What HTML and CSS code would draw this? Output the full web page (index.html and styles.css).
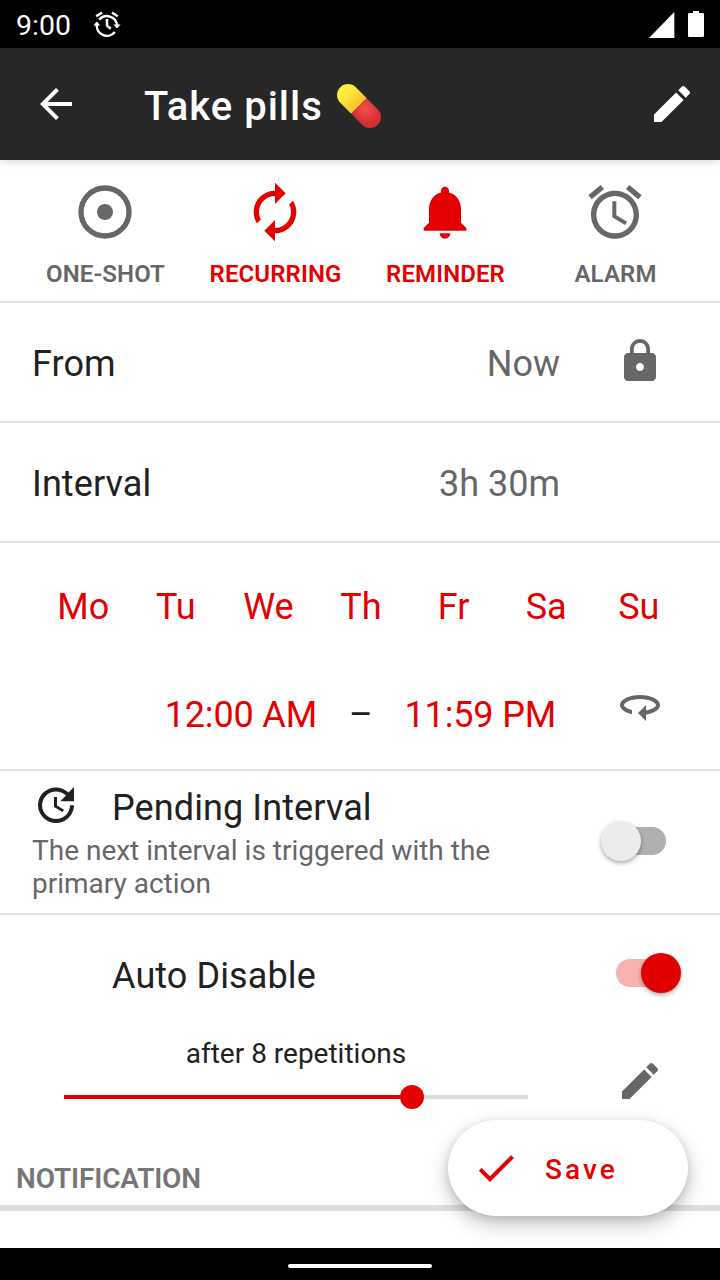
FILE: index.html
```html
<!doctype html>
<html lang="en">
  <head>
    <meta charset="utf-8">
    <title>Take pills</title>
    <meta name="viewport" content="width=device-width, initial-scale=1">
    <link rel="stylesheet" href="styles.css">
  </head>
  <body>
    <div class="statusbar">
      <span class="clock">9:00</span>
      <svg class="status-alarm" viewBox="0 0 28 28" fill="none" stroke="#fff" stroke-width="2.5">
        <path d="M3.2 5.2L9 1.6M24.8 5.2L19 1.6"/>
        <path d="M6.2 8.6A10.2 10.2 0 0 1 24 14.5"/>
        <path d="M21.8 21A10.2 10.2 0 0 1 3.8 13"/>
        <path d="M14 8v6.6l3.8 3.2"/>
        <path d="M.4 14.5h6.8L3.8 10.6zM20.4 13.4h7.2L24 17.6z" fill="#fff" stroke="none"/>
      </svg>
      <svg class="signal" viewBox="0 0 26 26"><path d="M0 26L25.3 0v26z" fill="#fff"/></svg>
      <svg class="battery" viewBox="0 0 16 26"><path d="M5 0h6v2h3.700q1.300 0 1.300 1.300v21.400q0 1.300-1.300 1.300H1.300Q0 26 0 24.700V3.300Q0 2 1.300 2H5z" fill="#fff"/></svg>
    </div>

    <header class="appbar">
      <svg class="icon" viewBox="0 0 24 24"><path d="M20 11H7.830l5.590-5.590L12 4l-8 8 8 8 1.410-1.410L7.830 13H20v-2z"/></svg>
      <h1 class="title">Take pills</h1>
      <svg class="pill" viewBox="0 0 46 46">
        <defs>
          <linearGradient id="yellow" x1="0" y1="0" x2="1" y2="0">
            <stop offset="0.300" stop-color="#ffeb3b"/>
            <stop offset="1" stop-color="#fbc02d"/>
          </linearGradient>
          <radialGradient id="red" cx="0.250" cy="0.400" r="0.700">
            <stop offset="0" stop-color="#ef5350"/>
            <stop offset="0.850" stop-color="#d32f2f"/>
          </radialGradient>
        </defs>
        <g transform="rotate(45 23 23)">
          <path d="M23 12H7.500a11 11 0 0 0 0 22H23z" fill="url(#yellow)"/>
          <path d="M23 12h15.500a11 11 0 0 1 0 22H23z" fill="url(#red)"/>
        </g>
      </svg>
      <svg class="icon appbar-edit" viewBox="0 0 24 24"><path d="M3 17.250V21h3.750L17.810 9.940l-3.750-3.750L3 17.250zM20.710 7.040c.39-.39.39-1.020 0-1.410l-2.340-2.340c-.39-.39-1.020-.39-1.410 0l-1.830 1.830 3.750 3.750 1.830-1.830z"/></svg>
    </header>

    <main class="content">
      <nav class="tabs">
        <div class="tab">
          <svg class="tab-icon" viewBox="0 0 24 24"><circle cx="12" cy="12" r="9" fill="none" stroke="currentColor" stroke-width="2"/><circle cx="12" cy="12" r="3"/></svg>
          <span>ONE-SHOT</span>
        </div>
        <div class="tab active">
          <svg class="tab-icon" viewBox="0 0 24 24"><path d="M12 6v3l4-4-4-4v3c-4.420 0-8 3.580-8 8 0 1.570.46 3.030 1.240 4.260L6.700 14.800c-.45-.83-.7-1.790-.7-2.800 0-3.310 2.690-6 6-6zm6.760 1.740L17.300 9.200c.44.84.7 1.790.7 2.800 0 3.310-2.690 6-6 6v-3l-4 4 4 4v-3c4.420 0 8-3.580 8-8 0-1.570-.46-3.030-1.240-4.260z"/></svg>
          <span>RECURRING</span>
        </div>
        <div class="tab active">
          <svg class="tab-icon" viewBox="0 0 24 24"><path d="M12 22c1.100 0 2-.9 2-2h-4c0 1.100.89 2 2 2zm6-6v-5c0-3.070-1.640-5.640-4.500-6.320V4c0-.83-.67-1.500-1.500-1.500s-1.500.67-1.500 1.500v.68C7.630 5.360 6 7.920 6 11v5l-2 2v1h16v-1l-2-2z"/></svg>
          <span>REMINDER</span>
        </div>
        <div class="tab">
          <svg class="tab-icon" viewBox="0 0 24 24"><path d="M22 5.720l-4.600-3.860-1.290 1.530 4.600 3.860L22 5.720zM7.880 3.390L6.600 1.860 2 5.710l1.290 1.530 4.590-3.850zM12.500 8H11v6l4.750 2.850.75-1.230-4-2.370V8zM12 4c-4.970 0-9 4.030-9 9s4.020 9 9 9c4.970 0 9-4.030 9-9s-4.030-9-9-9zm0 16c-3.870 0-7-3.130-7-7s3.130-7 7-7 7 3.130 7 7-3.130 7-7 7z"/></svg>
          <span>ALARM</span>
        </div>
      </nav>

      <div class="row">
        <span class="label">From</span>
        <span class="value">Now</span>
        <svg class="icon row-icon" viewBox="0 0 24 24"><path d="M18 8h-1V6c0-2.760-2.240-5-5-5S7 3.240 7 6v2H6c-1.100 0-2 .9-2 2v10c0 1.100.9 2 2 2h12c1.100 0 2-.9 2-2V10c0-1.100-.9-2-2-2zm-6 9c-1.100 0-2-.9-2-2s.9-2 2-2 2 .9 2 2-.9 2-2 2zm3.100-9H8.900V6c0-1.710 1.390-3.100 3.100-3.100 1.710 0 3.100 1.390 3.100 3.100v2z"/></svg>
      </div>

      <div class="row">
        <span class="label">Interval</span>
        <span class="value">3h 30m</span>
        <span class="row-icon"></span>
      </div>

      <section class="schedule">
        <div class="days">
          <span>Mo</span><span>Tu</span><span>We</span><span>Th</span><span>Fr</span><span>Sa</span><span>Su</span>
        </div>
        <div class="times">
          <span class="time">12:00 AM</span>
          <span class="dash">–</span>
          <span class="time">11:59 PM</span>
          <svg class="icon all-day" viewBox="0 0 24 24"><path transform="translate(24) scale(-1 1)" d="M12 7C6.480 7 2 9.240 2 12c0 2.240 2.940 4.130 7 4.770V20l4-4-4-4v2.730c-3.150-.56-5-1.900-5-2.730 0-1.060 3.040-3 8-3s8 1.940 8 3c0 .73-1.460 1.890-4 2.530v2.050c3.530-.77 6-2.530 6-4.580 0-2.760-4.480-5-10-5z"/></svg>
        </div>
      </section>

      <section class="pending">
        <div class="pending-text">
          <div class="pending-head">
            <svg class="icon" viewBox="0 0 24 24"><path d="M21 10.120h-6.780l2.740-2.820c-2.730-2.700-7.150-2.800-9.880-.1-2.730 2.710-2.730 7.080 0 9.790s7.150 2.710 9.880 0C18.320 15.650 19 14.080 19 12.100h2c0 1.980-.88 4.550-2.640 6.290-3.510 3.480-9.210 3.480-12.720 0-3.500-3.470-3.530-9.110-.02-12.580s9.140-3.470 12.650 0L21 3v7.120zM12.500 8v4.250l3.500 2.080-.72 1.210L11 13V8h1.500z"/></svg>
            <span class="label">Pending Interval</span>
          </div>
          <p class="hint">The next interval is triggered with the primary action</p>
        </div>
        <div class="switch"><span class="thumb"></span></div>
      </section>

      <section class="auto">
        <div class="auto-head">
          <span class="label">Auto Disable</span>
          <div class="switch on"><span class="thumb"></span></div>
        </div>
        <div class="auto-body">
          <div class="repeat">
            <span class="repeat-text">after 8 repetitions</span>
            <div class="slider">
              <div class="slider-fill" style="width: 75%"></div>
              <div class="slider-thumb"></div>
            </div>
          </div>
          <svg class="icon" viewBox="0 0 24 24"><path d="M3 17.250V21h3.750L17.810 9.940l-3.750-3.750L3 17.250zM20.710 7.040c.39-.39.39-1.020 0-1.410l-2.340-2.340c-.39-.39-1.020-.39-1.410 0l-1.830 1.830 3.750 3.750 1.830-1.830z"/></svg>
        </div>
      </section>

      <h2 class="section-title">NOTIFICATION</h2>

      <button class="save">
        <svg class="icon" viewBox="0 0 24 24"><path d="M9 16.170L4.830 12l-1.420 1.410L9 19 21 7l-1.410-1.410z"/></svg>
        <span>Save</span>
      </button>
    </main>

    <div class="navbar"><span class="handle"></span></div>
  </body>
</html>
```

FILE: styles.css
```css
* {
  box-sizing: border-box;
}
body {
  margin: 0;
  width: 720px;
  height: 1280px;
  overflow: hidden;
  display: flex;
  flex-direction: column;
  font-family: Roboto, "Liberation Sans", sans-serif;
  color: #212121;
  background: #fff;
}
svg {
  display: block;
  flex: none;
  fill: currentColor;
}
.icon {
  width: 48px;
  height: 48px;
}

/* system bars */
.statusbar {
  height: 48px;
  flex: none;
  padding: 0 16px;
  display: flex;
  align-items: center;
  background: #000;
  color: #fff;
}
.clock {
  width: 77px;
  font-size: 28.5px;
  line-height: 32px;
  padding-top: 3px;
}
.status-alarm {
  width: 28px;
  height: 28px;
  margin-top: 2px;
  fill: none;
}
.signal {
  width: 26px;
  height: 26px;
  margin-top: 1px;
  margin-left: auto;
  margin-right: 13px;
}
.battery {
  width: 16px;
  height: 26px;
}
.navbar {
  height: 32px;
  flex: none;
  display: flex;
  justify-content: center;
  padding-top: 16px;
  background: #000;
}
.handle {
  width: 144px;
  height: 4px;
  border-radius: 2px;
  background: #fff;
}

.appbar {
  height: 112px;
  flex: none;
  padding: 0 24px 0 32px;
  display: flex;
  align-items: center;
  background: #272727;
  color: #fff;
  position: relative;
  z-index: 1;
  box-shadow: 0 2px 8px rgba(0, 0, 0, 0.15);
}
.title {
  margin: 0 0 0 64px;
  padding-top: 5px;
  font-size: 40px;
  font-weight: 500;
  line-height: 49px;
  letter-spacing: 1px;
}
.pill {
  width: 46px;
  height: 46px;
  margin: 4px 0 0 13px;
}
.appbar-edit {
  margin-left: auto;
}

.content {
  flex: 1;
  min-height: 0;
  position: relative;
}

/* type tabs */
.tabs {
  height: 143px;
  padding: 20px 20px 0;
  display: flex;
  border-bottom: 2px solid #e0e0e0;
}
.tab {
  flex: 1;
  display: flex;
  flex-direction: column;
  align-items: center;
  gap: 16px;
  font-size: 24px;
  font-weight: 600;
  line-height: 28px;
  letter-spacing: 0.1px;
  color: #676767;
}
.tab span {
  padding-left: 1px;
}
.tab.active {
  color: #e40000;
}
.tab-icon {
  width: 64px;
  height: 64px;
}

.row {
  height: 120px;
  padding: 0 56px 2px 32px;
  display: flex;
  align-items: center;
  border-bottom: 2px solid #e0e0e0;
}
.label,
.value,
.days,
.times {
  font-size: 36px;
  line-height: 42px;
}
.label {
  letter-spacing: 0.1px;
}
.row .label,
.value {
  padding-top: 6px;
}
.value {
  margin-left: auto;
  color: #676767;
}
.row-icon {
  width: 48px;
  margin-left: 56px;
  color: #676767;
}

.schedule {
  height: 228px;
  padding-top: 43px;
  border-bottom: 2px solid #e0e0e0;
}
.days {
  display: flex;
  padding: 0 35px 0 37px;
  color: #e40000;
}
.days span {
  flex: 1;
  text-align: center;
}
.times {
  display: flex;
  align-items: flex-start;
  justify-content: flex-end;
  padding: 53px 56px 0 0;
  letter-spacing: -0.15px;
}
.time {
  padding-top: 13px;
  color: #e40000;
}
.dash {
  padding-top: 13px;
  margin: 0 32px;
}
.all-day {
  margin-left: 60px;
}
.all-day,
.auto-body .icon {
  color: #676767;
}

.pending {
  height: 144px;
  padding: 10px 38px 0 32px;
  display: flex;
  justify-content: space-between;
  border-bottom: 2px solid #e0e0e0;
}
.pending-text {
  width: 480px;
}
.pending-head {
  height: 48px;
  display: flex;
  gap: 32px;
}
.pending-head .label {
  padding-top: 6px;
}
.hint {
  margin: 5px 0 0;
  font-size: 28px;
  line-height: 33px;
  color: #676767;
}

/* switches */
.switch {
  width: 80px;
  height: 40px;
  display: flex;
  align-items: center;
  position: relative;
}
.switch:before {
  content: '';
  width: 60px;
  height: 28px;
  margin-left: 5px;
  border-radius: 14px;
  background: #b0b0b0;
}
.pending .switch {
  width: 81px;
  margin-top: 40px;
}
.thumb {
  position: absolute;
  left: 0;
  top: 0;
  width: 40px;
  height: 40px;
  border-radius: 50%;
  background: #ececec;
  box-shadow: 0 2px 4px rgba(0, 0, 0, 0.35);
}
.switch.on:before {
  margin-left: 15px;
  background: #f7b2b2;
}
.switch.on .thumb {
  left: 40px;
  background: #e00000;
}

.auto {
  padding: 38px 56px 0 64px;
}
.auto-head {
  display: flex;
  justify-content: space-between;
  margin-right: -17px;
  padding-left: 48px;
}
.auto-head .label {
  padding-top: 2px;
}
.auto-body {
  display: flex;
  justify-content: space-between;
  padding-top: 40px;
}
.auto-body .icon {
  margin-top: 20px;
}
.repeat {
  width: 464px;
  text-align: center;
}
.repeat-text {
  display: block;
  font-size: 28px;
  line-height: 33px;
}
.slider {
  height: 24px;
  margin-top: 15px;
  display: flex;
  align-items: center;
  background: linear-gradient(#dcdcdc, #dcdcdc) center / 100% 4px no-repeat;
}
.slider-fill {
  height: 4px;
  background: #e40000;
}
.slider-thumb {
  width: 24px;
  height: 24px;
  margin-left: -12px;
  border-radius: 50%;
  background: #e40000;
}

.section-title {
  margin: 0;
  padding: 53px 16px 10px;
  font-size: 28px;
  font-weight: 600;
  line-height: 33px;
  letter-spacing: -0.15px;
  color: #767676;
  border-bottom: 6px solid #e0e0e0;
}

/* floating save button */
.save {
  position: absolute;
  right: 32px;
  bottom: 32px;
  width: 240px;
  height: 96px;
  padding: 0 24px;
  display: flex;
  align-items: center;
  gap: 24px;
  border: 0;
  border-radius: 48px;
  background: #fff;
  color: #e40000;
  font: 500 28px/33px Roboto, "Liberation Sans", sans-serif;
  letter-spacing: 3.1px;
  box-shadow: 0 8px 20px rgba(0, 0, 0, 0.24), 0 2px 8px rgba(0, 0, 0, 0.12);
}
.save span {
  padding: 2px 0 0 1px;
}
```
